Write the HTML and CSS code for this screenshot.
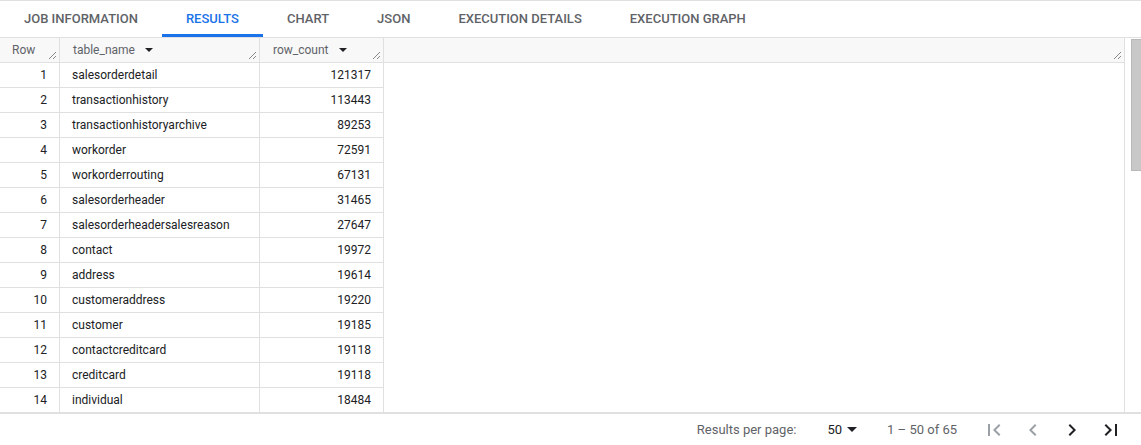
FILE: index.html
```html
<!DOCTYPE html>
<html>
<head>
<meta charset="utf-8">
<link rel="stylesheet" href="styles.css">
</head>
<body>
<div class="tabs">
  <div class="tab">JOB INFORMATION</div>
  <div class="tab active">RESULTS</div>
  <div class="tab">CHART</div>
  <div class="tab">JSON</div>
  <div class="tab">EXECUTION DETAILS</div>
  <div class="tab">EXECUTION GRAPH</div>
</div>
<div class="results">
  <div class="table">
    <div class="hcell">Row<span class="grip"></span></div>
    <div class="hcell">table_name<span class="sort"></span><span class="grip"></span></div>
    <div class="hcell">row_count<span class="sort"></span><span class="grip"></span></div>

    <div class="cell num">1</div><div class="cell">salesorderdetail</div><div class="cell num">121317</div>
    <div class="cell num">2</div><div class="cell">transactionhistory</div><div class="cell num">113443</div>
    <div class="cell num">3</div><div class="cell">transactionhistoryarchive</div><div class="cell num">89253</div>
    <div class="cell num">4</div><div class="cell">workorder</div><div class="cell num">72591</div>
    <div class="cell num">5</div><div class="cell">workorderrouting</div><div class="cell num">67131</div>
    <div class="cell num">6</div><div class="cell">salesorderheader</div><div class="cell num">31465</div>
    <div class="cell num">7</div><div class="cell">salesorderheadersalesreason</div><div class="cell num">27647</div>
    <div class="cell num">8</div><div class="cell">contact</div><div class="cell num">19972</div>
    <div class="cell num">9</div><div class="cell">address</div><div class="cell num">19614</div>
    <div class="cell num">10</div><div class="cell">customeraddress</div><div class="cell num">19220</div>
    <div class="cell num">11</div><div class="cell">customer</div><div class="cell num">19185</div>
    <div class="cell num">12</div><div class="cell">contactcreditcard</div><div class="cell num">19118</div>
    <div class="cell num">13</div><div class="cell">creditcard</div><div class="cell num">19118</div>
    <div class="cell num">14</div><div class="cell">individual</div><div class="cell num">18484</div>
  </div>
  <div class="filler">
    <div class="hcell filler-head"><span class="grip"></span></div>
  </div>
  <div class="vscroll"><div class="thumb"></div></div>
</div>
<div class="footer">
  <span class="label">Results per page:</span>
  <span class="perpage">50<span class="sort"></span></span>
  <span class="range">1 – 50 of 65</span>
  <div class="pager">
    <span class="btn disabled"><svg viewBox="0 0 24 24" width="24" height="24"><path d="M18.41 16.59L13.82 12l4.59-4.59L17 6l-6 6 6 6zM6 6h2v12H6z"/></svg></span>
    <span class="btn disabled"><svg viewBox="0 0 24 24" width="24" height="24"><path d="M15.41 7.41L14 6l-6 6 6 6 1.41-1.41L10.83 12z"/></svg></span>
    <span class="btn"><svg viewBox="0 0 24 24" width="24" height="24"><path d="M10 6L8.59 7.41 13.17 12l-4.58 4.59L10 18l6-6z"/></svg></span>
    <span class="btn"><svg viewBox="0 0 24 24" width="24" height="24"><path d="M5.59 7.41L10.18 12l-4.59 4.59L7 18l6-6-6-6zM16 6h2v12h-2z"/></svg></span>
  </div>
</div>
</body>
</html>
```
FILE: styles.css
```css
* { box-sizing: border-box; }
body {
  margin: 0;
  font-family: Roboto, "Liberation Sans", Arial, sans-serif;
  color: #202124;
  background: #fff;
}
.tabs {
  display: flex;
  height: 38px;
  border-top: 1px solid #e0e0e0;
  border-bottom: 1px solid #e0e0e0;
}
.tab {
  padding: 0 24px;
  height: 36px;
  line-height: 35px;
  font-size: 13px;
  font-weight: 500;
  color: #5f6368;
  border-bottom: 3px solid transparent;
}
.tab.active {
  color: #1a73e8;
  border-bottom-color: #1a73e8;
}
.results {
  display: flex;
  height: 376px;
  border-bottom: 2px solid #e0e0e0;
  overflow: hidden;
}
.table {
  display: grid;
  grid-template-columns: 60px 200px 124px;
  grid-auto-rows: 25px;
  align-content: start;
}
.hcell, .cell {
  height: 25px;
  border-right: 1px solid #e0e0e0;
  border-bottom: 1px solid #e0e0e0;
  font-size: 12px;
  line-height: 24px;
  padding: 0 12px;
  white-space: nowrap;
}
.hcell {
  position: relative;
  background: #f8f8f8;
  color: #5f6368;
  padding-left: 12px;
}
.table .hcell:nth-child(n+2) { padding-left: 13px; }
.cell.num { text-align: right; }
.sort {
  display: inline-block;
  width: 0;
  height: 0;
  margin-left: 10px;
  vertical-align: 2px;
  border-left: 4px solid transparent;
  border-right: 4px solid transparent;
  border-top: 4px solid #202124;
}
.grip {
  position: absolute;
  right: 3px;
  bottom: 3px;
  width: 7px;
  height: 7px;
  background:
    linear-gradient(135deg, transparent 0 45%, #888 45% 55%, transparent 55%),
    linear-gradient(135deg, transparent 0 75%, #888 75% 85%, transparent 85%);
  background-size: 7px 7px, 7px 7px;
}
.filler {
  flex: 1;
  border-right: 1px solid #e0e0e0;
}
.filler-head { border-right: none; }
.vscroll {
  width: 16px;
  padding-left: 6px;
  padding-top: 1px;
}
.thumb {
  width: 10px;
  height: 132px;
  background: #c8c8c8;
  border: 1px solid #b8b8b8;
  border-right: none;
}
.footer {
  display: flex;
  align-items: center;
  justify-content: flex-end;
  height: 31px;
  font-size: 13px;
  color: #5f6368;
  padding-right: 11px;
}
.label { margin-right: 31px; }
.perpage { color: #202124; margin-right: 30px; }
.perpage .sort { margin-left: 5px; vertical-align: 2px; border-left-width: 5px; border-right-width: 5px; border-top-width: 5px; }
.range { margin-right: 17px; }
.pager { display: flex; }
.btn {
  width: 39px;
  height: 31px;
  display: flex;
  align-items: center;
  justify-content: center;
}
.btn svg { fill: #202124; }
.btn.disabled svg { fill: #9aa0a6; }
```
